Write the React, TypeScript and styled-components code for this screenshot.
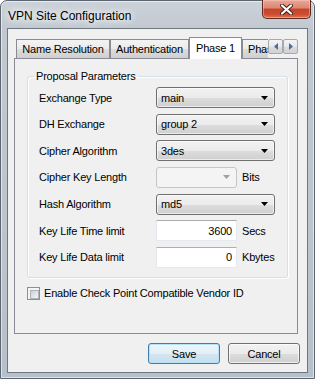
import React from 'react';
import styled, { createGlobalStyle, css } from 'styled-components';

const GlobalStyle = createGlobalStyle`
  html, body {
    margin: 0;
    padding: 0;
    background: #ffffff;
  }
  body {
    font-family: "Liberation Sans", Arial, sans-serif;
    font-size: 11px;
    letter-spacing: -0.2px;
    color: #000;
  }
  * {
    box-sizing: border-box;
  }
`;

const Window = styled.div`
  width: 315px;
  height: 379px;
  border: 1px solid #5c6670;
  border-radius: 7px 7px 0 0;
  background: linear-gradient(180deg, #cbd2d9 0px, #c1c8d0 28px, #bcc4cc 60%, #b7bfc8 100%);
  box-shadow: inset 0 0 0 1px rgba(255, 255, 255, 0.55);
  display: flex;
  flex-direction: column;
`;

const TitleBar = styled.div`
  height: 27px;
  display: flex;
  align-items: flex-start;
`;

const Title = styled.div`
  padding: 8px 0 0 7px;
  font-size: 12px;
  line-height: 14px;
  letter-spacing: 0;
  color: #000;
  text-shadow: 0 0 6px #fff, 0 0 10px #fff, 0 0 14px rgba(255, 255, 255, 0.8);
`;

const CloseButton = styled.div`
  margin: -1px 3px 0 auto;
  width: 49px;
  height: 19px;
  border: 1px solid #5e2a22;
  border-top: none;
  border-radius: 0 0 5px 5px;
  background: linear-gradient(180deg, #e9a797 0%, #dc8670 45%, #c4432a 50%, #cc4d32 80%, #e07a52 100%);
  box-shadow: inset 0 0 0 1px rgba(255, 210, 200, 0.45);
  display: flex;
  align-items: center;
  justify-content: center;
`;

const Client = styled.div`
  flex: 1;
  margin: 0 6px 5px 6px;
  border: 1px solid #6e7882;
  background: #f0f0f0;
  display: flex;
  flex-direction: column;
  padding: 8px 7px 8px 6px;
`;

const TabControl = styled.div`
  height: 297px;
  margin-right: 2px;
  display: flex;
  flex-direction: column;
`;

const TabStrip = styled.div`
  height: 22px;
  margin-bottom: -1px;
  display: flex;
  padding-left: 2px;
  position: relative;
  z-index: 1;
`;

const TabClip = styled.div`
  flex: 1;
  display: flex;
  align-items: flex-end;
  overflow: hidden;
`;

const Tab = styled.div<{ $active?: boolean; $width?: number }>`
  flex: none;
  width: ${props => (props.$width ? `${props.$width}px` : 'auto')};
  height: 19px;
  margin-bottom: 1px;
  padding: 0 5px;
  line-height: 18px;
  text-align: center;
  border: 1px solid #898c95;
  border-bottom: none;
  background: linear-gradient(180deg, #f3f3f3 0%, #ebebeb 50%, #dddddd 51%, #cfcfcf 100%);
  white-space: nowrap;

  ${props => props.$active && css`
    height: 22px;
    margin-bottom: 0;
    line-height: 20px;
    background: #ffffff;
  `}
`;

const ScrollArrows = styled.div`
  flex: none;
  display: flex;
  margin-top: 2px;
  height: 15px;
`;

const ArrowButton = styled.div`
  width: 15px;
  height: 15px;
  border: 1px solid #a5a9b0;
  border-radius: 2px;
  background: linear-gradient(180deg, #f4f4f4 0%, #e8e8e8 50%, #dcdcdc 51%, #d2d2d2 100%);
  display: flex;
  align-items: center;
  justify-content: center;
`;

const Panel = styled.div`
  flex: 1;
  border: 1px solid #898c95;
  background: #f0f0f0;
  display: flex;
  flex-direction: column;
`;

const Group = styled.fieldset`
  margin: 11px 9px 0 12px;
  padding: 4px 0 9px 11px;
  border: 1px solid #d5dfe5;
  border-radius: 3px;
  box-shadow: inset 1px 1px 0 #ffffff, 1px 1px 0 #ffffff;
  min-width: 0;
`;

const Legend = styled.legend`
  margin-left: -5px;
  padding: 0 2px;
  line-height: 13px;
`;

const Rows = styled.div`
  display: grid;
  grid-template-rows: repeat(7, 21px);
  row-gap: 5.65px;
`;

const Row = styled.div`
  display: flex;
  align-items: center;
`;

const Label = styled.div`
  width: 117px;
  flex: none;
`;

const Unit = styled.div`
  margin-left: 5px;
`;

const Combo = styled.div<{ $disabled?: boolean; $short?: boolean }>`
  width: ${props => (props.$short ? 81 : 119)}px;
  height: 21px;
  border: 1px solid #707070;
  border-radius: 3px;
  background: linear-gradient(180deg, #f2f2f2 0%, #ebebeb 50%, #dddddd 51%, #cfcfcf 100%);
  display: flex;
  align-items: center;
  padding: 0 6px 0 4px;
  box-shadow: inset 0 0 0 1px rgba(255, 255, 255, 0.6);

  ${props => props.$disabled && css`
    border-color: #c3c5c8;
    background: #f4f4f4;
    box-shadow: none;
  `}
`;

const ComboText = styled.span`
  flex: 1;
`;

const TextInput = styled.div`
  width: 81px;
  height: 21px;
  border: 1px solid #e3e9ef;
  border-top-color: #abadb3;
  background: #ffffff;
  display: flex;
  align-items: center;
  justify-content: flex-end;
  padding-right: 4px;
`;

const CheckRow = styled.label`
  margin: 9px 0 0 12px;
  display: flex;
  align-items: center;
  gap: 4px;
`;

const CheckBox = styled.span`
  width: 13px;
  height: 13px;
  border: 1px solid #8e8f8f;
  background: #f4f4f4;
  padding: 2px;
  display: block;

  &::after {
    content: '';
    display: block;
    width: 7px;
    height: 7px;
    border: 1px solid #aeb3b9;
    background: linear-gradient(135deg, #cbcfd5 0%, #f6f6f6 100%);
  }
`;

const ButtonBar = styled.div`
  margin-top: 9px;
  display: flex;
  justify-content: flex-end;
  gap: 8px;
`;

const Button = styled.div<{ $default?: boolean }>`
  width: 72px;
  height: 21px;
  border: 1px solid #707070;
  border-radius: 3px;
  background: linear-gradient(180deg, #f2f2f2 0%, #ebebeb 50%, #dddddd 51%, #cfcfcf 100%);
  box-shadow: inset 0 0 0 1px rgba(255, 255, 255, 0.7);
  display: flex;
  align-items: center;
  justify-content: center;

  ${props => props.$default && css`
    border-color: #3c7fb1;
    background: linear-gradient(180deg, #eef6fb 0%, #e3eff7 50%, #d3e6f2 51%, #c8dfee 100%);
    box-shadow: inset 0 0 0 1px #b6e2f8;
  `}
`;

const DropArrow = ({ color = '#000' }: { color?: string }) => (
  <svg width="7" height="4" viewBox="0 0 7 4">
    <path d="M0 0h7L3.5 4z" fill={color} />
  </svg>
);

const SideArrow = ({ dir }: { dir: 'left' | 'right' }) => (
  <svg width="4" height="7" viewBox="0 0 4 7">
    <path d={dir === 'left' ? 'M4 0v7L0 3.5z' : 'M0 0v7l4-3.5z'} fill="#4f6aa3" />
  </svg>
);

const CloseGlyph = () => (
  <svg width="13" height="11" viewBox="0 0 13 11">
    <path d="M2 1.5l9 8M11 1.5l-9 8" stroke="#4a1d16" strokeWidth="4" strokeLinecap="round" />
    <path d="M2 1.5l9 8M11 1.5l-9 8" stroke="#ffffff" strokeWidth="2.2" strokeLinecap="round" />
  </svg>
);

const App: React.FC = () => {
  return (
    <>
      <GlobalStyle />
      <Window>
        <TitleBar>
          <Title>VPN Site Configuration</Title>
          <CloseButton>
            <CloseGlyph />
          </CloseButton>
        </TitleBar>
        <Client>
          <TabControl>
            <TabStrip>
              <TabClip>
                <Tab $width={94}>Name Resolution</Tab>
                <Tab $width={79}>Authentication</Tab>
                <Tab $active $width={53}>Phase 1</Tab>
                <Tab>Phase 2</Tab>
              </TabClip>
              <ScrollArrows>
                <ArrowButton><SideArrow dir="left" /></ArrowButton>
                <ArrowButton><SideArrow dir="right" /></ArrowButton>
              </ScrollArrows>
            </TabStrip>
            <Panel>
              <Group>
                <Legend>Proposal Parameters</Legend>
                <Rows>
                  <Row>
                    <Label>Exchange Type</Label>
                    <Combo><ComboText>main</ComboText><DropArrow /></Combo>
                  </Row>
                  <Row>
                    <Label>DH Exchange</Label>
                    <Combo><ComboText>group 2</ComboText><DropArrow /></Combo>
                  </Row>
                  <Row>
                    <Label>Cipher Algorithm</Label>
                    <Combo><ComboText>3des</ComboText><DropArrow /></Combo>
                  </Row>
                  <Row>
                    <Label>Cipher Key Length</Label>
                    <Combo $disabled $short><ComboText /><DropArrow color="#a0a0a0" /></Combo>
                    <Unit>Bits</Unit>
                  </Row>
                  <Row>
                    <Label>Hash Algorithm</Label>
                    <Combo><ComboText>md5</ComboText><DropArrow /></Combo>
                  </Row>
                  <Row>
                    <Label>Key Life Time limit</Label>
                    <TextInput>3600</TextInput>
                    <Unit>Secs</Unit>
                  </Row>
                  <Row>
                    <Label>Key Life Data limit</Label>
                    <TextInput>0</TextInput>
                    <Unit>Kbytes</Unit>
                  </Row>
                </Rows>
              </Group>
              <CheckRow>
                <CheckBox />
                Enable Check Point Compatible Vendor ID
              </CheckRow>
            </Panel>
          </TabControl>
          <ButtonBar>
            <Button $default>Save</Button>
            <Button>Cancel</Button>
          </ButtonBar>
        </Client>
      </Window>
    </>
  );
};

export default App;
